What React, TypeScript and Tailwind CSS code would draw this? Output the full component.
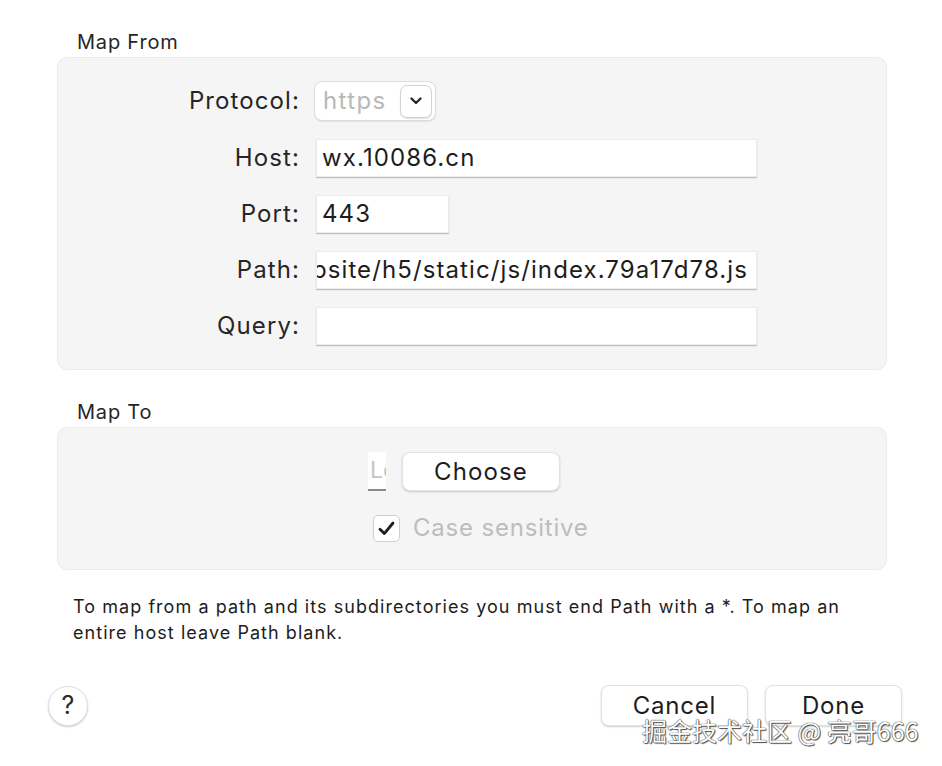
import React from 'react';

const font = { fontFamily: 'Inter, "Noto Sans", "Liberation Sans", sans-serif' };

function Field({ value, width, alignEnd }: { value: string; width: string; alignEnd?: boolean }) {
  return (
    <div
      className={`h-[38px] ${width} flex items-center overflow-hidden whitespace-nowrap bg-white text-[24px] tracking-[1.1px] text-[#1d1d1d] border border-[#ececec] shadow-[0_1px_1px_rgba(0,0,0,0.22)] ${
        alignEnd ? 'justify-end pr-[8px]' : 'px-[5px]'
      }`}
    >
      {value}
    </div>
  );
}

function Row({ label, children }: { label: string; children: React.ReactNode }) {
  return (
    <div className="flex items-center">
      <div className="w-[242px] text-right text-[24px] tracking-[1.1px] text-[#262626]">{label}</div>
      <div className="ml-[16px]">{children}</div>
    </div>
  );
}

export default function App() {
  return (
    <div className="relative w-[942px] h-[766px] bg-white overflow-hidden" style={font}>
      <div className="px-[57px] pt-[29px]">
        <h2 className="pl-[20px] text-[20px] leading-[26px] tracking-[0.8px] text-[#262626]">Map From</h2>
        <div className="mt-[2px] w-[830px] rounded-[10px] border border-[#ebebeb] bg-[#f5f5f5] pt-[23px] pb-[24px] flex flex-col gap-[18px]">
          <div className="flex items-center">
            <div className="w-[242px] text-right text-[24px] tracking-[1.1px] text-[#262626]">Protocol:</div>
            <div className="ml-[14px] h-[40px] w-[122px] rounded-[8px] border border-[#dcdcdc] bg-white flex items-center justify-between pl-[8px] pr-[3px] shadow-[0_1px_1px_rgba(0,0,0,0.08)]">
              <span className="text-[24px] tracking-[1.4px] text-[#b8b8b8]">https</span>
              <div className="h-[33px] w-[32px] rounded-[7px] border border-[#d2d2d2] bg-white flex items-center justify-center shadow-[0_1px_1px_rgba(0,0,0,0.12)]">
                <svg width="12" height="8" viewBox="0 0 12 8" fill="none">
                  <path d="M1.5 1.5 6 6l4.5-4.5" stroke="#222" strokeWidth="2.2" strokeLinecap="round" strokeLinejoin="round" />
                </svg>
              </div>
            </div>
          </div>
          <Row label="Host:">
            <Field value="wx.10086.cn" width="w-[441px]" />
          </Row>
          <Row label="Port:">
            <Field value="443" width="w-[133px]" />
          </Row>
          <Row label="Path:">
            <Field value="/website/h5/static/js/index.79a17d78.js" width="w-[441px]" alignEnd />
          </Row>
          <Row label="Query:">
            <Field value="" width="w-[441px]" />
          </Row>
        </div>

        <h2 className="mt-[29px] pl-[20px] text-[20px] leading-[26px] tracking-[0.8px] text-[#262626]">Map To</h2>
        <div className="mt-[2px] w-[830px] h-[143px] rounded-[10px] border border-[#ebebeb] bg-[#f5f5f5] pt-[24px] pl-[310px] flex flex-col">
          <div className="flex items-center">
            <div className="h-[39px] w-[18px] overflow-hidden whitespace-nowrap bg-white border-b-2 border-[#8a8a8a] pl-[2px] flex items-center text-[23px] text-[#c4c4c4]">
              Local
            </div>
            <button className="ml-[16px] h-[39px] w-[158px] rounded-[8px] border border-[#e2e2e2] bg-white text-[24px] tracking-[1.1px] text-[#1d1d1d] shadow-[0_1px_2px_rgba(0,0,0,0.18)]">
              Choose
            </button>
          </div>
          <div className="mt-[19px] ml-[5px] flex items-center">
            <div className="h-[27px] w-[27px] rounded-[5px] border border-[#cfcfcf] bg-white flex items-center justify-center">
              <svg width="17" height="15" viewBox="0 0 17 15" fill="none">
                <path d="M2 8.2 6.3 12.6 15 2" stroke="#1e1e1e" strokeWidth="2.8" strokeLinecap="round" strokeLinejoin="round" />
              </svg>
            </div>
            <span className="ml-[13px] text-[24px] tracking-[0.8px] text-[#bdbdbd]">Case sensitive</span>
          </div>
        </div>

        <p className="mt-[24px] pl-[16px] text-[18px] leading-[26px] tracking-[1.05px] text-[#1d1d1d]">
          To map from a path and its subdirectories you must end Path with a *. To map an
          <br />
          entire host leave Path blank.
        </p>
      </div>

      <div className="mt-[39px] flex items-center pl-[48px] pr-[40px]">
        <button className="h-[40px] w-[40px] rounded-full border border-[#e0e0e0] bg-white text-[25px] text-[#2a2a2a] shadow-[0_1px_2px_rgba(0,0,0,0.2)] flex items-center justify-center">
          ?
        </button>
        <div className="ml-auto flex gap-[17px]">
          <button className="h-[41px] w-[147px] rounded-[8px] border border-[#e2e2e2] bg-white text-[24px] tracking-[0.8px] text-[#1d1d1d] shadow-[0_1px_2px_rgba(0,0,0,0.18)]">
            Cancel
          </button>
          <button className="h-[41px] w-[137px] rounded-[8px] border border-[#e2e2e2] bg-white text-[24px] tracking-[0.8px] text-[#1d1d1d] shadow-[0_1px_2px_rgba(0,0,0,0.18)]">
            Done
          </button>
        </div>
      </div>

      <div
        className="absolute left-[642px] top-[713px] text-[25px] leading-[34px] text-white whitespace-nowrap [text-shadow:0_0_1px_#333,0_0_1px_#333,1px_1px_1px_#555]"
        style={{ fontFamily: '"Noto Sans CJK SC", Inter, sans-serif' }}
      >
        掘金技术社区 @ 亮哥666
      </div>
    </div>
  );
}
